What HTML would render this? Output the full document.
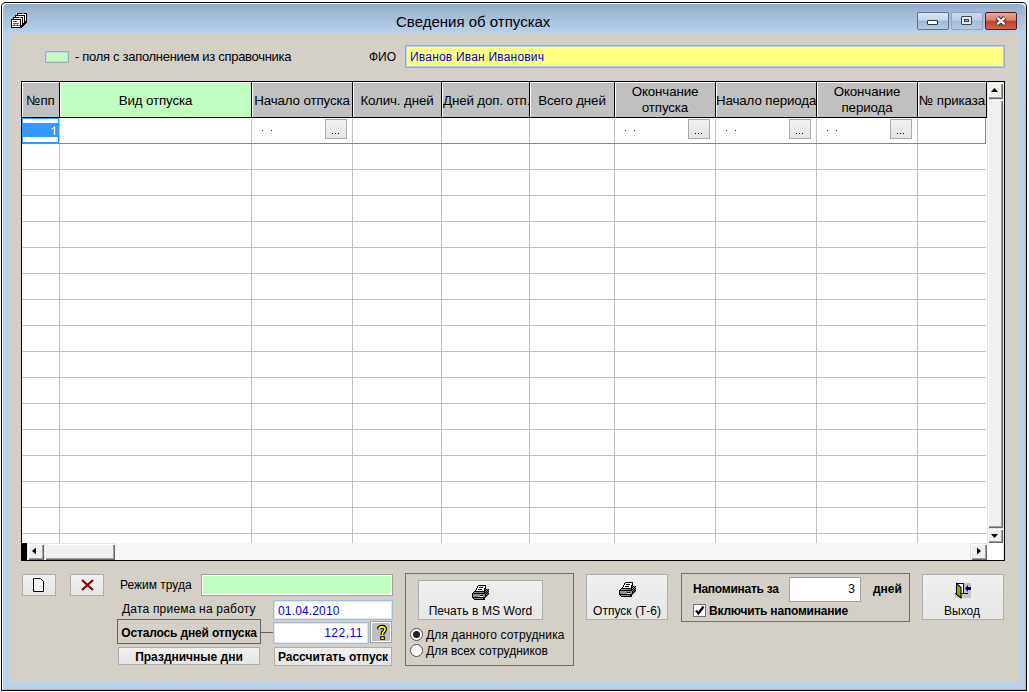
<!DOCTYPE html>
<html><head><meta charset="utf-8">
<style>
*{margin:0;padding:0;box-sizing:border-box}
html,body{width:1029px;height:692px;overflow:hidden;background:#fff;position:relative}
body{font-family:"Liberation Sans",sans-serif;color:#000}
.a{position:absolute}
.t{position:absolute;white-space:nowrap;font-family:"Liberation Sans",sans-serif;line-height:1}
.f13{font-size:13px}
.f12{font-size:12px}
.b{font-weight:bold}
.btn{position:absolute;border:1px solid #acacac;background:linear-gradient(#f2f2f2,#ebebeb 50%,#dddddd 51%,#cfcfcf)}
.wbtn{position:absolute;border:1px solid #adadad;background:linear-gradient(#f0f0f0,#e6e6e6)}
.hc{position:absolute;top:82px;height:35px;background:#c0c0c0;border-top:1px solid #fff;border-left:1px solid #fff}
.vl{position:absolute;width:1px;background:#c0c0c0}
.hl{position:absolute;height:1px;background:#c0c0c0}
.bk{position:absolute;background:#000}
.dd{position:absolute;width:22px;height:20px;border:1px solid #acacac;background:linear-gradient(#f2f2f2,#e4e4e4);font-size:11px;line-height:1;text-align:center}
.dot{position:absolute;width:1px;height:1px;background:#4a0048}
.sb{background:#f0f0f0;border-top:1px solid #e3e3e3;border-left:1px solid #e3e3e3;box-shadow:inset 1px 1px 0 #fff,inset -1px -1px 0 #696969,inset -2px -2px 0 #a0a0a0}
</style></head><body>

<!-- window frame -->
<div class="a" style="left:1px;top:2px;width:1026px;height:689px;background:#000;border-radius:5px 5px 0 0"></div>
<div class="a" style="left:2px;top:3px;width:1024px;height:687px;background:#fff;border-radius:4px 4px 0 0"></div>
<div class="a" style="left:3px;top:4px;width:1023px;height:686px;background:linear-gradient(#b9d1ea,#b9d1ea 40px,#30e0ff 120px);border-radius:5px 5px 0 0"></div>
<div class="a" style="left:3px;top:4px;width:1022px;height:685px;background:linear-gradient(#94aecb,#b9d1ea 29px,#b9d1ea);border-radius:5px 5px 0 0"></div>

<!-- title icon -->
<svg class="a" style="left:8px;top:8px" width="24" height="24" viewBox="0 0 24 24" shape-rendering="crispEdges">
 <path d="M19 13 L19 14 L13 20 L12 20 L12 19 L18 13 Z" fill="#000"/>
 <rect x="13" y="14" width="5" height="1" fill="#000"/><rect x="13" y="15" width="4" height="2" fill="#000"/><rect x="13" y="17" width="2" height="2" fill="#000"/>
 <rect x="9" y="5" width="10" height="9" fill="#000"/><rect x="10" y="6" width="8" height="7" fill="#fff"/><rect x="7" y="7" width="10" height="9" fill="#000"/><rect x="8" y="8" width="8" height="7" fill="#fff"/><rect x="5" y="9" width="10" height="9" fill="#000"/><rect x="6" y="10" width="8" height="7" fill="#fff"/><rect x="3" y="11" width="10" height="9" fill="#000"/><rect x="4" y="12" width="8" height="7" fill="#fff"/>
 <rect x="5" y="13" width="4" height="1" fill="#555"/><rect x="5" y="15" width="6" height="1" fill="#666"/>
 <rect x="4" y="17" width="8" height="1" fill="#8a6a30"/><rect x="6" y="16" width="1" height="1" fill="#8a6a30"/><rect x="9" y="16" width="1" height="1" fill="#8a6a30"/>
 <rect x="14" y="5" width="2" height="1" fill="#a06020"/><rect x="11" y="9" width="2" height="1" fill="#a06020"/>
</svg>

<div class="t" style="left:396px;top:14px;font-size:15px;color:#000">Сведения об отпусках</div>

<!-- title buttons -->
<div class="a" style="left:917px;top:12px;width:32px;height:18px;border:1px solid #5a7090;border-radius:2px;background:linear-gradient(#dbe7f4,#c5d7eb 45%,#9db6d2 50%,#b4cbe4)"></div>
<div class="a" style="left:927px;top:20px;width:11px;height:5px;border:1px solid #2a3448;background:#fff;border-radius:1px"></div>
<div class="a" style="left:951px;top:12px;width:32px;height:18px;border:1px solid #8fa6c0;border-radius:2px;background:linear-gradient(#c9d9ea,#bdd0e6 45%,#a5bcd8 50%,#b3c9e2)"></div>
<div class="a" style="left:961px;top:16px;width:11px;height:9px;border:1px solid #3a4458;background:#e6e6e6;border-radius:1px"></div>
<div class="a" style="left:964px;top:19px;width:5px;height:3px;border:1px solid #3a4458;background:#9fb4d2"></div>
<div class="a" style="left:985px;top:12px;width:32px;height:18px;border:1px solid #5a1a1a;border-radius:2px;background:linear-gradient(#eaa898,#d88070 45%,#c0402a 50%,#d06048)"></div>
<svg class="a" style="left:994px;top:15px" width="14" height="12" viewBox="0 0 14 12">
 <path d="M3.2 2.6 L10.8 9.4 M10.8 2.6 L3.2 9.4" stroke="#3a2830" stroke-width="4.6" fill="none"/>
 <path d="M3.4 2.8 L10.6 9.2 M10.6 2.8 L3.4 9.2" stroke="#fff" stroke-width="2.4" fill="none"/>
</svg>

<!-- client -->
<div class="a" id="client" style="left:9px;top:33px;width:1010px;height:649px;background:#d4d0c8"></div>

<!-- legend -->
<div class="a" style="left:45px;top:51px;width:24px;height:12px;border:1px solid #a4acbc;background:#c0ffc0;box-shadow:inset 0 0 0 1px #c4d4ee"></div>
<div class="t f13" style="left:75px;top:50px;letter-spacing:-0.3px">- поля с заполнением из справочника</div>
<div class="t f12" style="left:369px;top:51px">ФИО</div>
<div class="a" style="left:405px;top:45px;width:600px;height:23px;border:1px solid #a0a8b8;background:#ffff80;box-shadow:inset 0 0 0 1px #b8d0f0"></div>
<div class="t f12" style="left:410px;top:51px;color:#0000e0;letter-spacing:0.2px">Иванов Иван Иванович</div>


<div class="a" style="left:21px;top:81px;width:984px;height:480px;background:#fff"></div>
<div class="hc" style="left:22px;width:37px;background:#c0c0c0"></div>
<div class="bk" style="left:59px;top:82px;width:1px;height:36px"></div>
<div class="hc" style="left:60px;width:191px;background:#c0ffc0"></div>
<div class="bk" style="left:251px;top:82px;width:1px;height:36px"></div>
<div class="hc" style="left:252px;width:100px;background:#c0c0c0"></div>
<div class="bk" style="left:352px;top:82px;width:1px;height:36px"></div>
<div class="hc" style="left:353px;width:88px;background:#c0c0c0"></div>
<div class="bk" style="left:441px;top:82px;width:1px;height:36px"></div>
<div class="hc" style="left:442px;width:87px;background:#c0c0c0"></div>
<div class="bk" style="left:529px;top:82px;width:1px;height:36px"></div>
<div class="hc" style="left:530px;width:84px;background:#c0c0c0"></div>
<div class="bk" style="left:614px;top:82px;width:1px;height:36px"></div>
<div class="hc" style="left:615px;width:100px;background:#c0c0c0"></div>
<div class="bk" style="left:715px;top:82px;width:1px;height:36px"></div>
<div class="hc" style="left:716px;width:100px;background:#c0c0c0"></div>
<div class="bk" style="left:816px;top:82px;width:1px;height:36px"></div>
<div class="hc" style="left:817px;width:100px;background:#c0c0c0"></div>
<div class="bk" style="left:917px;top:82px;width:1px;height:36px"></div>
<div class="hc" style="left:918px;width:68px;background:#c0c0c0"></div>
<div class="bk" style="left:986px;top:82px;width:1px;height:36px"></div>
<div class="t f13 hdt" style="font-size:13.33px;letter-spacing:-0.12px;overflow:hidden;height:32px;left:22px;width:37px;top:94px;text-align:center;">№пп</div>
<div class="t f13 hdt" style="font-size:13.33px;letter-spacing:-0.12px;overflow:hidden;height:32px;left:60px;width:191px;top:94px;text-align:center;">Вид отпуска</div>
<div class="t f13 hdt" style="font-size:13.33px;letter-spacing:-0.12px;overflow:hidden;height:32px;left:252px;width:100px;top:94px;text-align:center;">Начало отпуска</div>
<div class="t f13 hdt" style="font-size:13.33px;letter-spacing:-0.12px;overflow:hidden;height:32px;left:353px;width:88px;top:94px;text-align:center;">Колич. дней</div>
<div class="t f13 hdt" style="font-size:13.33px;letter-spacing:-0.12px;overflow:hidden;height:32px;left:442px;width:87px;top:94px;text-align:center;text-align:left;text-indent:1px;">Дней доп. отп.</div>
<div class="t f13 hdt" style="font-size:13.33px;letter-spacing:-0.12px;overflow:hidden;height:32px;left:530px;width:84px;top:94px;text-align:center;">Всего дней</div>
<div class="t f13 hdt" style="font-size:13.33px;letter-spacing:-0.12px;overflow:hidden;height:32px;left:615px;width:100px;top:84px;text-align:center;line-height:16px;">Окончание<br>отпуска</div>
<div class="t f13 hdt" style="font-size:13.33px;letter-spacing:-0.12px;overflow:hidden;height:32px;left:716px;width:100px;top:94px;text-align:center;">Начало периода</div>
<div class="t f13 hdt" style="font-size:13.33px;letter-spacing:-0.12px;overflow:hidden;height:32px;left:817px;width:100px;top:84px;text-align:center;line-height:16px;">Окончание<br>периода</div>
<div class="t f13 hdt" style="font-size:13.33px;letter-spacing:-0.12px;overflow:hidden;height:32px;left:918px;width:68px;top:94px;text-align:center;">№ приказа</div>
<div class="bk" style="left:22px;top:117px;width:965px;height:1px"></div>
<div class="hl" style="left:22px;top:169px;width:964px"></div>
<div class="hl" style="left:22px;top:195px;width:964px"></div>
<div class="hl" style="left:22px;top:221px;width:964px"></div>
<div class="hl" style="left:22px;top:247px;width:964px"></div>
<div class="hl" style="left:22px;top:273px;width:964px"></div>
<div class="hl" style="left:22px;top:299px;width:964px"></div>
<div class="hl" style="left:22px;top:325px;width:964px"></div>
<div class="hl" style="left:22px;top:351px;width:964px"></div>
<div class="hl" style="left:22px;top:377px;width:964px"></div>
<div class="hl" style="left:22px;top:403px;width:964px"></div>
<div class="hl" style="left:22px;top:429px;width:964px"></div>
<div class="hl" style="left:22px;top:455px;width:964px"></div>
<div class="hl" style="left:22px;top:481px;width:964px"></div>
<div class="hl" style="left:22px;top:507px;width:964px"></div>
<div class="hl" style="left:22px;top:533px;width:964px"></div>
<div class="vl" style="left:59px;top:118px;height:425px"></div>
<div class="vl" style="left:251px;top:118px;height:425px"></div>
<div class="vl" style="left:352px;top:118px;height:425px"></div>
<div class="vl" style="left:441px;top:118px;height:425px"></div>
<div class="vl" style="left:529px;top:118px;height:425px"></div>
<div class="vl" style="left:614px;top:118px;height:425px"></div>
<div class="vl" style="left:715px;top:118px;height:425px"></div>
<div class="vl" style="left:816px;top:118px;height:425px"></div>
<div class="vl" style="left:917px;top:118px;height:425px"></div>
<div class="hl" style="left:22px;top:143px;width:964px;background:#3399ff"></div>
<div class="a" style="left:985px;top:118px;width:1px;height:26px;background:#3399ff"></div>
<div class="a" style="left:22px;top:118px;width:37px;height:26px;background:#3399ff"></div>
<div class="a" style="left:23px;top:119px;width:35px;height:4px;background:#fff"></div>
<div class="a" style="left:23px;top:137px;width:35px;height:5px;background:#fff"></div>
<svg class="a" style="left:49px;top:126px" width="8" height="10"><path d="M5.5 0.6v8.2" stroke="#fff" stroke-width="1.3"/><path d="M2.6 3.2 L5.5 1" stroke="#fff" stroke-width="1"/></svg>
<div class="dot" style="left:262px;top:130px"></div><div class="dot" style="left:271px;top:130px"></div>
<div class="dd" style="left:325px;top:119px"></div>
<div class="a" style="left:332px;top:133px;width:1px;height:1px;background:#000"></div>
<div class="a" style="left:335px;top:133px;width:1px;height:1px;background:#000"></div>
<div class="a" style="left:338px;top:133px;width:1px;height:1px;background:#000"></div>
<div class="dot" style="left:625px;top:130px"></div><div class="dot" style="left:634px;top:130px"></div>
<div class="dd" style="left:688px;top:119px"></div>
<div class="a" style="left:695px;top:133px;width:1px;height:1px;background:#000"></div>
<div class="a" style="left:698px;top:133px;width:1px;height:1px;background:#000"></div>
<div class="a" style="left:701px;top:133px;width:1px;height:1px;background:#000"></div>
<div class="dot" style="left:726px;top:130px"></div><div class="dot" style="left:735px;top:130px"></div>
<div class="dd" style="left:789px;top:119px"></div>
<div class="a" style="left:796px;top:133px;width:1px;height:1px;background:#000"></div>
<div class="a" style="left:799px;top:133px;width:1px;height:1px;background:#000"></div>
<div class="a" style="left:802px;top:133px;width:1px;height:1px;background:#000"></div>
<div class="dot" style="left:827px;top:130px"></div><div class="dot" style="left:836px;top:130px"></div>
<div class="dd" style="left:890px;top:119px"></div>
<div class="a" style="left:897px;top:133px;width:1px;height:1px;background:#000"></div>
<div class="a" style="left:900px;top:133px;width:1px;height:1px;background:#000"></div>
<div class="a" style="left:903px;top:133px;width:1px;height:1px;background:#000"></div>
<div class="bk" style="left:21px;top:81px;width:984px;height:1px"></div>
<div class="bk" style="left:21px;top:81px;width:1px;height:480px"></div>
<div class="bk" style="left:21px;top:560px;width:984px;height:1px"></div>
<div class="bk" style="left:1004px;top:81px;width:1px;height:480px"></div>
<div class="a" style="left:1003px;top:82px;width:1px;height:478px;background:#e4e2da"></div>
<div class="bk" style="left:21px;top:543px;width:6px;height:17px"></div>
<div class="a sb" style="left:987px;top:82px;width:16px;height:17px;"></div>
<svg class="a" style="left:987px;top:82px" width="16" height="17"><path d="M4 10h7l-3.5-4z" fill="#000"/></svg>
<div class="a sb" style="left:987px;top:99px;width:16px;height:429px;"></div>
<div class="a sb" style="left:987px;top:528px;width:16px;height:15px;"></div>
<svg class="a" style="left:987px;top:528px" width="16" height="15"><path d="M4 6h7l-3.5 4z" fill="#000"/></svg>
<div class="a" style="left:987px;top:543px;width:16px;height:17px;background:#fff"></div>
<div class="a" style="left:27px;top:543px;width:960px;height:17px;background:repeating-conic-gradient(#f0f0f0 0 25%,#fff 0 50%) 0 0/2px 2px"></div>
<div class="a sb" style="left:27px;top:543px;width:17px;height:17px;"></div>
<svg class="a" style="left:27px;top:543px" width="17" height="17"><path d="M9 4.5v7l-4-3.5z" fill="#000"/></svg>
<div class="a sb" style="left:44px;top:543px;width:71px;height:17px;"></div>
<div class="a sb" style="left:970px;top:543px;width:17px;height:17px;"></div>
<svg class="a" style="left:970px;top:543px" width="17" height="17"><path d="M7 4.5v7l4-3.5z" fill="#000"/></svg>
<!-- bottom controls -->
<div class="wbtn" style="left:22px;top:574px;width:34px;height:22px"></div>
<svg class="a" style="left:33px;top:578px" width="12" height="14" viewBox="0 0 12 14">
 <path d="M0.5 0.5H7.5L10.5 3.5V13.5H0.5Z" fill="#f4f4f4" stroke="#000" stroke-width="1" stroke-linejoin="miter"/>
 <rect x="8" y="1" width="1" height="1" fill="#000"/><rect x="9" y="2" width="1" height="1" fill="#000"/>
</svg>
<div class="wbtn" style="left:70px;top:574px;width:34px;height:22px"></div>
<svg class="a" style="left:81px;top:579px" width="13" height="12" viewBox="0 0 13 12">
 <path d="M1 1L12 11M12 1L1 11" stroke="#800000" stroke-width="2.2"/>
</svg>

<div class="t f12" style="left:120px;top:579px">Режим труда</div>
<div class="a" style="left:201px;top:574px;width:192px;height:22px;border:1px solid #a0a0a0;background:#c0ffc0;box-shadow:inset 0 0 0 1px #fff"></div>

<div class="t f12" style="left:122px;top:603px;letter-spacing:0.2px">Дата приема на работу</div>
<div class="a" style="left:273px;top:600px;width:120px;height:20px;border:1px solid #a6bcd6;background:#fff;box-shadow:inset 0 0 0 1px #d8e6f6"></div>
<div class="t f12" style="left:278px;top:605px;color:#0000e0;letter-spacing:0.15px">01.04.2010</div>

<div class="a" style="left:117px;top:619px;width:144px;height:25px;border:1px solid #646464;background:#d4d0c8"></div>
<div class="t f12 b" style="left:117px;top:627px;width:144px;text-align:center;letter-spacing:-0.15px">Осталось дней отпуска</div>
<div class="a" style="left:261px;top:632px;width:12px;height:1px;background:#646464"></div>
<div class="a" style="left:273px;top:622px;width:96px;height:22px;border:1px solid #a6bcd6;background:#fff;box-shadow:inset 0 0 0 1px #d8e6f6"></div>
<div class="t f12" style="left:274px;top:627px;width:89px;text-align:right;color:#0000e0;letter-spacing:0.5px">122,11</div>
<div class="a" style="left:370px;top:621px;width:22px;height:22px;background:#c0c0c0;border:1px solid #a0a0a0;box-shadow:inset 0 0 0 1px #fff"></div>
<svg class="a" style="left:370px;top:621px" width="22" height="22" viewBox="0 0 22 22">
 <path d="M9 8.3 Q9 5.8 12 5.8 Q15 5.8 15 8.3 Q15 10.2 12.8 11.6 L12.5 14" stroke="#000" stroke-width="4" fill="none" stroke-linejoin="round"/>
 <rect x="10.2" y="15.2" width="4.6" height="3.8" fill="#000"/>
 <path d="M9 8.3 Q9 5.8 12 5.8 Q15 5.8 15 8.3 Q15 10.2 12.8 11.6 L12.5 14" stroke="#ffff00" stroke-width="1.7" fill="none"/>
 <rect x="11.2" y="16.2" width="2.6" height="1.8" fill="#ffff00"/>
</svg>

<div class="wbtn" style="left:118px;top:647px;width:142px;height:18px"></div>
<div class="t f12 b" style="left:118px;top:651px;width:142px;text-align:center">Праздничные дни</div>
<div class="wbtn" style="left:274px;top:647px;width:118px;height:19px"></div>
<div class="t f12 b" style="left:274px;top:651px;width:118px;text-align:center">Рассчитать отпуск</div>

<!-- print group -->
<div class="a" style="left:405px;top:573px;width:169px;height:93px;border:1px solid #707070"></div>
<div class="wbtn" style="left:418px;top:580px;width:125px;height:40px"></div>
<svg class="a" style="left:470px;top:583px" width="22" height="20" viewBox="0 0 22 20" shape-rendering="crispEdges">
 <defs><pattern id="dith1" width="2" height="2" patternUnits="userSpaceOnUse"><rect width="2" height="2" fill="#707070"/><rect width="1" height="1" fill="#000"/><rect x="1" y="1" width="1" height="1" fill="#000"/></pattern></defs>
 <path d="M15 6h4v5l-4 5z" fill="url(#dith1)"/>
 <rect x="8" y="3" width="7" height="2" fill="#fff"/><rect x="7" y="5" width="7" height="2" fill="#fff"/><rect x="6" y="7" width="8" height="1" fill="#fff"/>
 <rect x="8" y="2" width="8" height="1" fill="#000"/><rect x="15" y="2" width="1" height="4" fill="#000"/>
 <rect x="7" y="3" width="1" height="2" fill="#000"/><rect x="6" y="5" width="1" height="2" fill="#000"/><rect x="5" y="7" width="1" height="1" fill="#000"/>
 <rect x="9" y="4" width="4" height="1" fill="#000"/><rect x="8" y="6" width="4" height="1" fill="#000"/>
 <rect x="14" y="5" width="1" height="3" fill="#000"/>
 <rect x="4" y="8" width="11" height="1" fill="#000"/>
 <rect x="3" y="9" width="12" height="1" fill="#000"/><rect x="4" y="9" width="10" height="1" fill="#8a8a8a"/>
 <rect x="2" y="10" width="13" height="1" fill="#000"/>
 <rect x="2" y="11" width="14" height="3" fill="#000"/><rect x="3" y="11" width="12" height="3" fill="#8e8e8e"/>
 <rect x="10" y="12" width="3" height="1" fill="#000"/><rect x="10" y="13" width="3" height="1" fill="#fff"/>
 <rect x="2" y="14" width="13" height="1" fill="#000"/>
 <rect x="3" y="15" width="12" height="1" fill="#000"/><rect x="4" y="15" width="9" height="1" fill="#8a8a8a"/>
 <rect x="4" y="16" width="11" height="1" fill="#000"/>
</svg>
<div class="t f12" style="left:418px;top:605px;width:125px;text-align:center;letter-spacing:0.1px">Печать в MS Word</div>
<div class="a" style="left:410px;top:628px;width:13px;height:13px;border-radius:50%;border:1px solid #505050;background:#fff"></div>
<div class="a" style="left:413px;top:631px;width:7px;height:7px;border-radius:50%;background:#222"></div>
<div class="t f12" style="left:426px;top:629px;letter-spacing:0.15px">Для данного сотрудника</div>
<div class="a" style="left:410px;top:644px;width:13px;height:13px;border-radius:50%;border:1px solid #505050;background:#fff"></div>
<div class="t f12" style="left:426px;top:645px">Для всех сотрудников</div>

<div class="wbtn" style="left:586px;top:574px;width:82px;height:46px"></div>
<svg class="a" style="left:617px;top:580px" width="22" height="20" viewBox="0 0 22 20" shape-rendering="crispEdges">
 <defs><pattern id="dith2" width="2" height="2" patternUnits="userSpaceOnUse"><rect width="2" height="2" fill="#707070"/><rect width="1" height="1" fill="#000"/><rect x="1" y="1" width="1" height="1" fill="#000"/></pattern></defs>
 <path d="M15 6h4v5l-4 5z" fill="url(#dith2)"/>
 <rect x="8" y="3" width="7" height="2" fill="#fff"/><rect x="7" y="5" width="7" height="2" fill="#fff"/><rect x="6" y="7" width="8" height="1" fill="#fff"/>
 <rect x="8" y="2" width="8" height="1" fill="#000"/><rect x="15" y="2" width="1" height="4" fill="#000"/>
 <rect x="7" y="3" width="1" height="2" fill="#000"/><rect x="6" y="5" width="1" height="2" fill="#000"/><rect x="5" y="7" width="1" height="1" fill="#000"/>
 <rect x="9" y="4" width="4" height="1" fill="#000"/><rect x="8" y="6" width="4" height="1" fill="#000"/>
 <rect x="14" y="5" width="1" height="3" fill="#000"/>
 <rect x="4" y="8" width="11" height="1" fill="#000"/>
 <rect x="3" y="9" width="12" height="1" fill="#000"/><rect x="4" y="9" width="10" height="1" fill="#8a8a8a"/>
 <rect x="2" y="10" width="13" height="1" fill="#000"/>
 <rect x="2" y="11" width="14" height="3" fill="#000"/><rect x="3" y="11" width="12" height="3" fill="#8e8e8e"/>
 <rect x="10" y="12" width="3" height="1" fill="#000"/><rect x="10" y="13" width="3" height="1" fill="#fff"/>
 <rect x="2" y="14" width="13" height="1" fill="#000"/>
 <rect x="3" y="15" width="12" height="1" fill="#000"/><rect x="4" y="15" width="9" height="1" fill="#8a8a8a"/>
 <rect x="4" y="16" width="11" height="1" fill="#000"/>
</svg>
<div class="t f12" style="left:586px;top:605px;width:82px;text-align:center">Отпуск (Т-6)</div>

<!-- reminder group -->
<div class="a" style="left:681px;top:573px;width:229px;height:49px;border:1px solid #707070"></div>
<div class="t f12 b" style="left:693px;top:583px;letter-spacing:-0.25px">Напоминать за</div>
<div class="a" style="left:789px;top:577px;width:72px;height:25px;border:1px solid #a0a0a0;background:#fff"></div>
<div class="t f12" style="left:790px;top:583px;width:65px;text-align:right">3</div>
<div class="t f12 b" style="left:873px;top:583px">дней</div>
<div class="a" style="left:693px;top:604px;width:13px;height:13px;border:1px solid #707070;background:#fff"></div>
<svg class="a" style="left:693px;top:604px" width="13" height="13" viewBox="0 0 13 13"><path d="M3 6.5l2.5 3l5-7" stroke="#000" stroke-width="2.2" fill="none"/></svg>
<div class="t f12 b" style="left:709px;top:605px;letter-spacing:-0.2px">Включить напоминание</div>

<div class="wbtn" style="left:922px;top:574px;width:82px;height:46px"></div>
<svg class="a" style="left:952px;top:580px" width="22" height="20" viewBox="0 0 22 20" shape-rendering="crispEdges">
 <rect x="9" y="3" width="10" height="15" fill="#c4c4c4"/><rect x="3" y="14" width="6" height="4" fill="#d0d0d0"/>
 <rect x="4" y="3" width="8" height="11" fill="#000"/><rect x="5" y="4" width="6" height="9" fill="#fff"/>
 <rect x="3" y="13" width="13" height="1" fill="#000"/>
 <path d="M4.5 3.5 L9 7.5 L9 18 L4.5 14.5 Z" fill="#a0a000" stroke="#000" stroke-width="1.1" shape-rendering="auto"/>
 <path d="M13 8.5 L16 5 L16 7 L19 7 L19 10 L16 10 L16 12 Z" fill="#0000a0" shape-rendering="auto"/>
</svg>
<div class="t f12" style="left:921px;top:605px;width:82px;text-align:center">Выход</div>

</body></html>
